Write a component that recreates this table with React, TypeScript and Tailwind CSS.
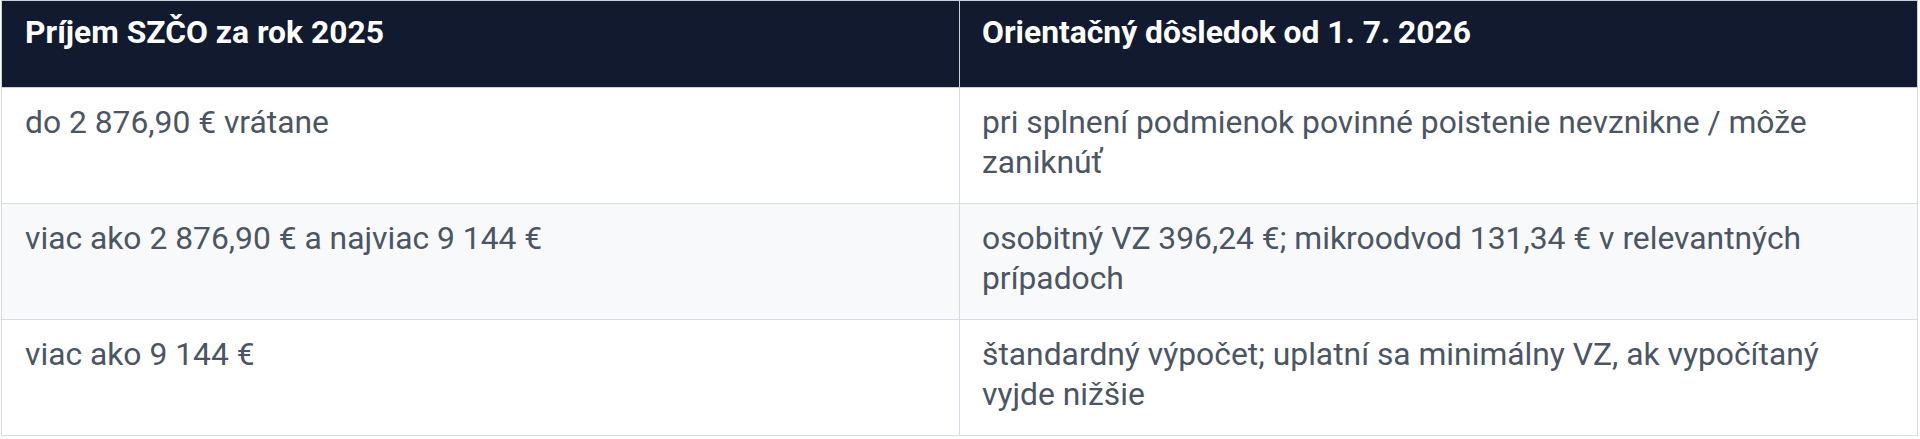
const rows = [
  {
    income: "do 2 876,90 € vrátane",
    effect: "pri splnení podmienok povinné poistenie nevznikne / môže zaniknúť",
  },
  {
    income: "viac ako 2 876,90 € a najviac 9 144 €",
    effect: "osobitný VZ 396,24 €; mikroodvod 131,34 € v relevantných prípadoch",
  },
  {
    income: "viac ako 9 144 €",
    effect: "štandardný výpočet; uplatní sa minimálny VZ, ak vypočítaný vyjde nižšie",
  },
];

export default function App() {
  return (
    <div className="min-h-[439px] w-full bg-white font-['Roboto','Liberation_Sans',sans-serif]">
      <table className="ml-[1px] w-[1916px] table-fixed border-collapse border border-[#d5dbe3]">
        <colgroup>
          <col className="w-[958px]" />
          <col className="w-[958px]" />
        </colgroup>
        <thead>
          <tr className="h-[87px] bg-[#111a2e]">
            <th className="border border-[#c9d0da] px-[23px] pt-[11px] text-left align-top text-[31.8px] font-bold leading-[40px] text-white">
              Príjem SZČO za rok 2025
            </th>
            <th className="border border-[#c9d0da] pl-[22px] pr-[60px] pt-[11px] text-left align-top text-[31.8px] font-bold leading-[40px] text-white">
              Orientačný dôsledok od 1. 7. 2026
            </th>
          </tr>
        </thead>
        <tbody>
          {rows.map((r, i) => (
            <tr key={i} className={i === 1 ? "bg-[#f8f9fb]" : "bg-white"}>
              <td className="border border-[#d5dbe3] px-[23px] pt-[14px] pb-[21px] align-top text-[31.8px] leading-[40px] text-[#4b5563]">
                {r.income}
              </td>
              <td className="border border-[#d5dbe3] pl-[22px] pr-[60px] pt-[14px] pb-[21px] align-top text-[31.8px] leading-[40px] text-[#4b5563]">
                {r.effect}
              </td>
            </tr>
          ))}
        </tbody>
      </table>
    </div>
  );
}
